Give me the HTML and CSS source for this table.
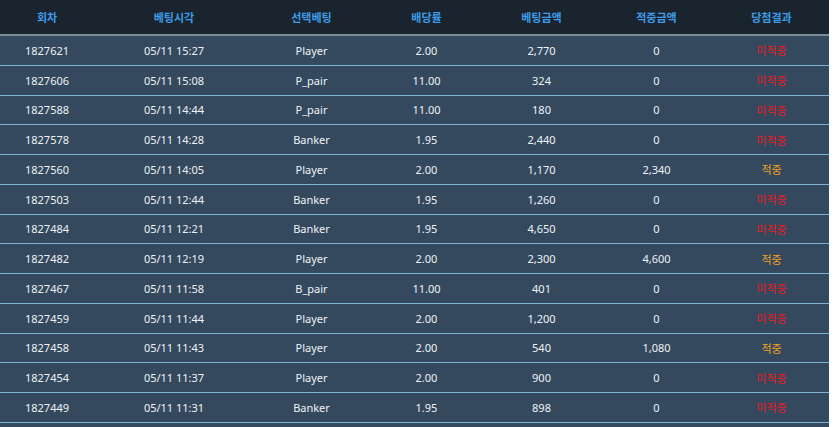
FILE: index.html
```html
<!DOCTYPE html>
<html lang="ko">
<head>
<meta charset="utf-8">
<link rel="stylesheet" href="styles.css">
</head>
<body>
<div class="wrap">
<table class="bets">
<colgroup>
<col class="c1"><col class="c2"><col class="c3"><col class="c4"><col class="c5"><col class="c6"><col class="c7">
</colgroup>
<thead>
<tr><th>회차</th><th>베팅시각</th><th>선택베팅</th><th>배당률</th><th>베팅금액</th><th>적중금액</th><th>당첨결과</th></tr>
</thead>
<tbody>
<tr><td>1827621</td><td>05/11 15:27</td><td>Player</td><td>2.00</td><td>2,770</td><td>0</td><td class="lose">미적중</td></tr>
<tr><td>1827606</td><td>05/11 15:08</td><td>P_pair</td><td>11.00</td><td>324</td><td>0</td><td class="lose">미적중</td></tr>
<tr><td>1827588</td><td>05/11 14:44</td><td>P_pair</td><td>11.00</td><td>180</td><td>0</td><td class="lose">미적중</td></tr>
<tr><td>1827578</td><td>05/11 14:28</td><td>Banker</td><td>1.95</td><td>2,440</td><td>0</td><td class="lose">미적중</td></tr>
<tr><td>1827560</td><td>05/11 14:05</td><td>Player</td><td>2.00</td><td>1,170</td><td>2,340</td><td class="win">적중</td></tr>
<tr><td>1827503</td><td>05/11 12:44</td><td>Banker</td><td>1.95</td><td>1,260</td><td>0</td><td class="lose">미적중</td></tr>
<tr><td>1827484</td><td>05/11 12:21</td><td>Banker</td><td>1.95</td><td>4,650</td><td>0</td><td class="lose">미적중</td></tr>
<tr><td>1827482</td><td>05/11 12:19</td><td>Player</td><td>2.00</td><td>2,300</td><td>4,600</td><td class="win">적중</td></tr>
<tr><td>1827467</td><td>05/11 11:58</td><td>B_pair</td><td>11.00</td><td>401</td><td>0</td><td class="lose">미적중</td></tr>
<tr><td>1827459</td><td>05/11 11:44</td><td>Player</td><td>2.00</td><td>1,200</td><td>0</td><td class="lose">미적중</td></tr>
<tr><td>1827458</td><td>05/11 11:43</td><td>Player</td><td>2.00</td><td>540</td><td>1,080</td><td class="win">적중</td></tr>
<tr><td>1827454</td><td>05/11 11:37</td><td>Player</td><td>2.00</td><td>900</td><td>0</td><td class="lose">미적중</td></tr>
<tr><td>1827449</td><td>05/11 11:31</td><td>Banker</td><td>1.95</td><td>898</td><td>0</td><td class="lose">미적중</td></tr>
</tbody>
</table>
</div>
</body>
</html>
```
FILE: styles.css
```css
html, body {
  margin: 0;
  padding: 0;
  background: #ffffff;
  overflow: hidden;
}
.wrap {
  width: 829px;
  height: 100vh;
  background: #34495e;
}
.bets {
  width: 829px;
  border-collapse: collapse;
  table-layout: fixed;
  font-family: "Noto Sans", "Noto Sans CJK KR", sans-serif;
  font-size: 11px;
  color: #eef2f6;
}
.c1 { width: 94px; }
.c2 { width: 160px; }
.c3 { width: 115px; }
.c4, .c5, .c6, .c7 { width: 115px; }
.bets th {
  background: #19242f;
  color: #3f9be6;
  font-weight: 700;
  height: 34px;
  padding: 0;
  text-align: center;
  border-bottom: 2px solid #7d8d9c;
}
.bets td {
  background: #34495e;
  height: 28.75px;
  padding: 0;
  text-align: center;
  border-bottom: 1px solid #7fb4d9;
}
.bets td.lose { color: #ea1a24; }
.bets td.win { color: #f2a11c; }
```
